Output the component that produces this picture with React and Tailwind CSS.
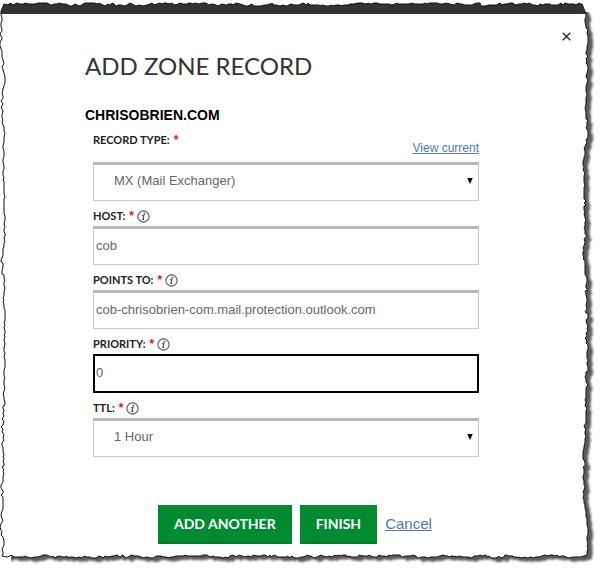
import React, { useMemo } from 'react';

const recordTypes = ['A (Host)', 'CNAME (Alias)', 'MX (Mail Exchanger)', 'TXT (Text)', 'SRV (Service)'];
const ttlOptions = ['1/2 Hour', '1 Hour', '12 Hours', '1 Day', '1 Week'];

const fieldClass =
  'block h-[39px] w-full rounded-none border border-t-3 border-[#c8c8c8] border-t-[#b8b8b8] bg-white pb-[3px] text-[13px] text-[#666] outline-none';

// Small seeded generator so the torn edge is the same on every render
function createRandom(seed) {
  let value = seed;
  return () => {
    value = (value * 16807) % 2147483647;
    return value / 2147483647;
  };
}

// Walk from start to end, drifting slowly round a middle line with small sharp nicks
function tearEdge(random, start, end, low, high) {
  const direction = end > start ? 1 : -1;
  const points = [];
  let position = start;
  let drift = (low + high) / 2;
  while ((end - position) * direction > 0) {
    const nick = (random() - 0.5) * 2;
    const offset = Math.min(high, Math.max(low, drift + nick));
    points.push([Math.round(position), Math.round(offset)]);
    position += direction * (1 + random() * 3);
    drift += (random() - 0.5) * 2;
    drift = Math.min(high - 0.5, Math.max(low + 0.5, drift));
  }
  return points;
}

function TornPaper() {
  const path = useMemo(() => {
    const random = createRandom(4211);
    const top = tearEdge(random, 4, 585, 3, 6);
    const right = tearEdge(random, 14, 555, 583, 588).map(([y, x]) => [x, y]);
    const bottom = tearEdge(random, 584, 6, 555, 558);
    const left = tearEdge(random, 556, 7, 0, 5).map(([y, x]) => [x, y]);
    return `M${[...top, ...right, ...bottom, ...left].map(p => p.join(' ')).join('L')}Z`;
  }, []);

  return (
    <svg
      className="absolute inset-0 h-full w-full"
      viewBox="0 0 602 575"
      preserveAspectRatio="none"
      aria-hidden="true"
    >
      <defs>
        <clipPath id="paper">
          <path d={path} />
        </clipPath>
        <clipPath id="shade">
          <path d="M11 12H602V575H11Z" />
        </clipPath>
        <filter id="soften">
          <feGaussianBlur stdDeviation="1.3" />
        </filter>
      </defs>
      <g clipPath="url(#shade)">
        <path d={path} fill="#5c5c5c" filter="url(#soften)" transform="translate(5 4)" />
      </g>
      <path d={path} fill="#fff" />
      <path d="M0 0H602V14H0Z" fill="#333" clipPath="url(#paper)" />
      <path d={path} fill="none" stroke="#111" strokeWidth="1" />
    </svg>
  );
}

function InfoIcon() {
  return (
    <svg className="ml-[3px] h-[13px] w-[13px]" viewBox="0 0 13 13" fill="none" aria-hidden="true">
      <circle cx="6.5" cy="6.5" r="5.6" stroke="#555" strokeWidth="1.1" />
      <circle cx="7.4" cy="3.7" r="0.9" fill="#444" />
      <path d="M5.3 5.6H6.9L5.9 9.4H7.2" stroke="#444" strokeWidth="1.1" />
    </svg>
  );
}

function FieldLabel({ htmlFor, children, info = true }) {
  return (
    <label
      htmlFor={htmlFor}
      className="flex h-4 items-center font-[Lato,sans-serif] text-[11px] leading-4 font-bold text-[#222]"
    >
      {children}
      <span className="ml-1 font-['Liberation_Sans',sans-serif] text-xs text-[#e81010]">*</span>
      {info && <InfoIcon />}
    </label>
  );
}

function SelectField({ id, options, defaultValue }) {
  return (
    <div className="relative">
      <select id={id} defaultValue={defaultValue} className={`${fieldClass} appearance-none pr-6 pl-5`}>
        {options.map(option => (
          <option key={option}>{option}</option>
        ))}
      </select>
      <svg
        className="pointer-events-none absolute top-4 right-[6px] h-[6px] w-[6px]"
        viewBox="0 0 6 6"
        aria-hidden="true"
      >
        <path d="M0.3 0H5.7L3 6Z" fill="#000" />
      </svg>
    </div>
  );
}

function TextField({ id, label, defaultValue, active }) {
  return (
    <div className="space-y-[2px]">
      <FieldLabel htmlFor={id}>{label}</FieldLabel>
      <input
        id={id}
        type="text"
        defaultValue={defaultValue}
        className={
          active
            ? 'block h-[39px] w-full border-2 border-black bg-white pb-[2px] pl-px text-[13px] text-[#666] outline-none'
            : `${fieldClass} pl-[2px]`
        }
      />
    </div>
  );
}

export default function App() {
  const buttonClass =
    'h-[39px] border-b-2 border-[#007a29] bg-[#008a32] px-4 font-[Lato,sans-serif] text-sm font-bold text-white';

  return (
    <div className="relative min-h-screen bg-white font-['Liberation_Sans',Arial,sans-serif]">
      <TornPaper />

      <main className="relative pt-6 pb-[30px]">
        {/* Close */}
        <div className="flex justify-end pr-6">
          <button type="button" aria-label="Close" className="flex h-6 w-6 items-center justify-center">
            <svg className="h-[9px] w-[9px]" viewBox="0 0 9 9" aria-hidden="true">
              <path d="M0.7 0.7L8.3 8.3M8.3 0.7L0.7 8.3" stroke="#333" strokeWidth="1.5" />
            </svg>
          </button>
        </div>

        <form className="pr-[123px] pl-[85px]" onSubmit={e => e.preventDefault()}>
          <h1 className="font-[Lato,sans-serif] text-2xl leading-9 text-[#333]">ADD ZONE RECORD</h1>
          <h2 className="mt-[22px] text-sm leading-[18px] font-bold text-black">CHRISOBRIEN.COM</h2>

          <div className="mt-2 ml-2 space-y-[7px]">
            {/* Record type */}
            <div>
              <div className="mb-[6px] flex h-6 justify-between">
                <FieldLabel htmlFor="record-type" info={false}>RECORD TYPE:</FieldLabel>
                <a href="#current" className="self-end text-xs leading-4 text-[#5577b5] underline">
                  View current
                </a>
              </div>
              <SelectField id="record-type" options={recordTypes} defaultValue="MX (Mail Exchanger)" />
            </div>

            <TextField id="host" label="HOST:" defaultValue="cob" />
            <TextField
              id="points-to"
              label="POINTS TO:"
              defaultValue="cob-chrisobrien-com.mail.protection.outlook.com"
            />
            <TextField id="priority" label="PRIORITY:" defaultValue="0" active />

            {/* TTL */}
            <div className="space-y-[2px]">
              <FieldLabel htmlFor="ttl">TTL:</FieldLabel>
              <SelectField id="ttl" options={ttlOptions} defaultValue="1 Hour" />
            </div>
          </div>

          {/* Actions */}
          <div className="mt-12 ml-[73px] flex items-center gap-2 whitespace-nowrap">
            <button type="button" className={buttonClass}>ADD ANOTHER</button>
            <button type="submit" className={buttonClass}>FINISH</button>
            <a href="#cancel" className="text-[15px] text-[#5577b5] underline">Cancel</a>
          </div>
        </form>
      </main>
    </div>
  );
}
